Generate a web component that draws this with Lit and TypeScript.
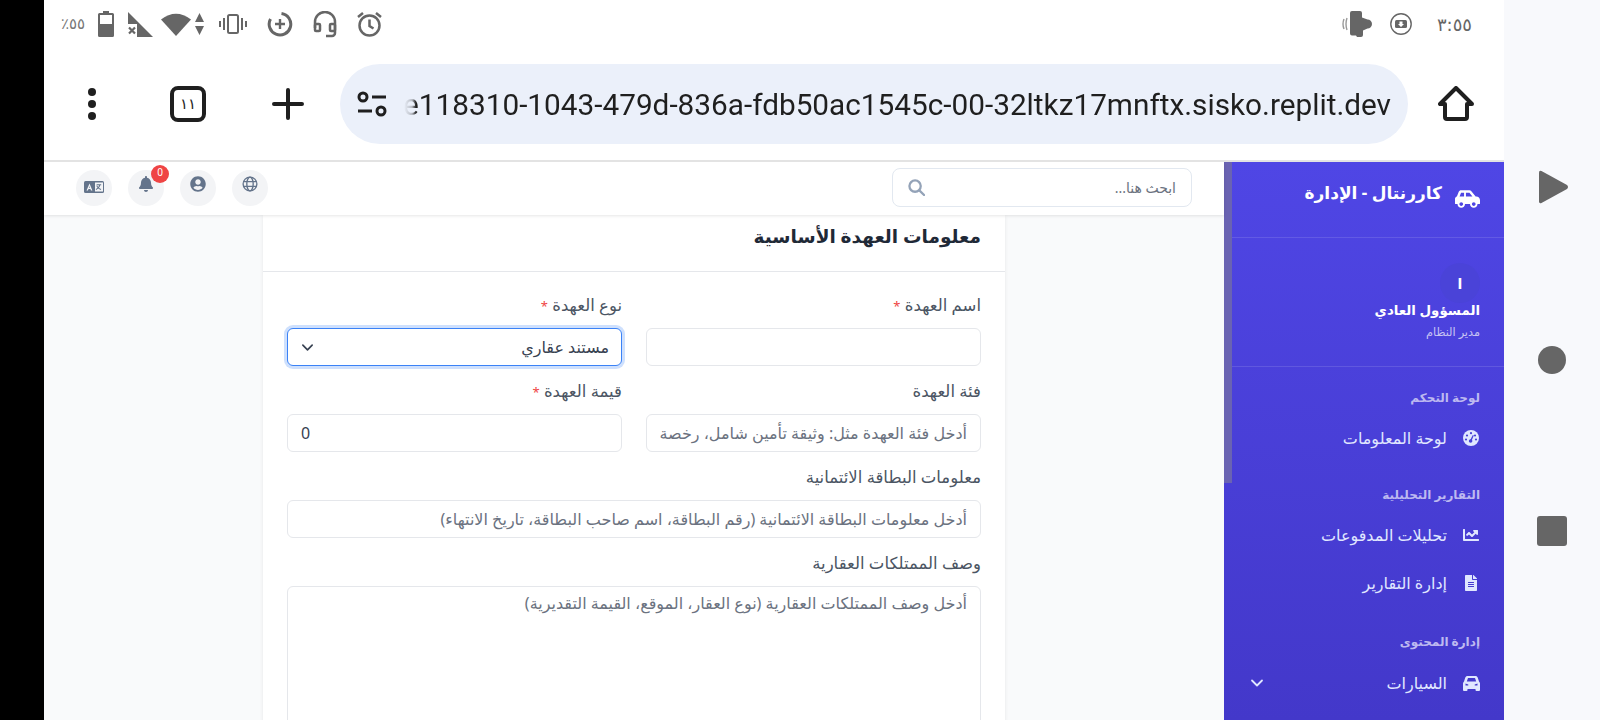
import { LitElement, html, css } from 'lit';
import { customElement } from 'lit/decorators.js';

const fa = (vb: string, d: string, cls = '') =>
  html`<svg class=${cls} viewBox=${vb} fill="currentColor"><path d=${d}></path></svg>`;

const CAR_SIDE = 'M544 192h-16L419.22 56.02A64.025 64.025 0 0 0 369.24 32H155.33c-26.17 0-49.7 15.93-59.42 40.23L48 194.26C20.44 201.4 0 226.21 0 256v112c0 8.84 7.16 16 16 16h48c0 53.02 42.98 96 96 96s96-42.98 96-96h128c0 53.02 42.98 96 96 96s96-42.98 96-96h48c8.84 0 16-7.16 16-16v-80c0-53.02-42.98-96-96-96zM160 432c-26.47 0-48-21.53-48-48s21.53-48 48-48 48 21.53 48 48-21.53 48-48 48zm72-240H116.93l38.4-96H232v96zm48 0V96h89.24l76.8 96H280zm200 240c-26.47 0-48-21.53-48-48s21.53-48 48-48 48 21.53 48 48-21.53 48-48 48z';
const CHART = 'M496 384H64V80c0-8.84-7.16-16-16-16H16C7.16 64 0 71.16 0 80v336c0 17.67 14.33 32 32 32h464c8.84 0 16-7.16 16-16v-32c0-8.84-7.16-16-16-16zM464 96H345.94c-21.38 0-32.09 25.85-16.97 40.97l32.4 32.4L288 242.75l-73.37-73.37c-12.5-12.5-32.76-12.5-45.25 0l-68.69 68.69c-6.25 6.25-6.25 16.38 0 22.63l22.62 22.62c6.25 6.25 16.38 6.25 22.63 0L192 237.25l73.37 73.37c12.5 12.5 32.76 12.5 45.25 0l96-96 32.4 32.4c15.12 15.12 40.97 4.41 40.97-16.97V112c.01-8.84-7.15-16-15.99-16z';
const FILE = 'M224 136V0H24C10.7 0 0 10.7 0 24v464c0 13.3 10.7 24 24 24h336c13.3 0 24-10.7 24-24V160H248c-13.2 0-24-10.8-24-24zm64 236c0 6.6-5.4 12-12 12H108c-6.6 0-12-5.4-12-12v-8c0-6.6 5.4-12 12-12h168c6.6 0 12 5.4 12 12v8zm0-64c0 6.6-5.4 12-12 12H108c-6.6 0-12-5.4-12-12v-8c0-6.6 5.4-12 12-12h168c6.6 0 12 5.4 12 12v8zm0-72v8c0 6.6-5.4 12-12 12H108c-6.6 0-12-5.4-12-12v-8c0-6.6 5.4-12 12-12h168c6.6 0 12 5.4 12 12zm96-114.1v6.1H256V0h6.1c6.4 0 12.5 2.5 17 7l97.9 98c4.5 4.5 7 10.6 7 16.9z';
const BELL = 'M224 512c35.32 0 63.97-28.65 63.97-64H160.03c0 35.35 28.65 64 63.97 64zm215.39-149.71c-19.32-20.76-55.47-51.99-55.47-154.29 0-77.7-54.48-139.9-127.94-155.16V32c0-17.67-14.32-32-31.98-32s-31.98 14.33-31.98 32v20.84C118.56 68.1 64.08 130.3 64.08 208c0 102.3-36.15 133.53-55.47 154.29-6 6.45-8.66 14.16-8.61 21.71.11 16.4 12.98 32 32.1 32h383.8c19.12 0 32-15.6 32.1-32 .05-7.55-2.61-15.27-8.61-21.71z';
const USER = 'M248 8C111 8 0 119 0 256s111 248 248 248 248-111 248-248S385 8 248 8zm0 96c48.6 0 88 39.4 88 88s-39.4 88-88 88-88-39.4-88-88 39.4-88 88-88zm0 344c-58.7 0-111.3-26.6-146.5-68.2 18.8-35.4 55.6-59.8 98.5-59.8 2.4 0 4.8.4 7.1 1.1 13 4.2 26.6 6.9 40.9 6.9 14.3 0 28-2.7 40.9-6.9 2.3-.7 4.7-1.1 7.1-1.1 42.9 0 79.7 24.4 98.5 59.8C359.3 421.4 306.7 448 248 448z';

const gauge = html`<svg viewBox="0 0 16 16"><circle cx="8" cy="8" r="8" fill="currentColor"></circle>
  <g fill="#4640d6"><circle cx="4" cy="5.5" r="1.1"></circle><circle cx="8" cy="3.2" r="1.1"></circle><circle cx="12" cy="5.5" r="1.1"></circle><circle cx="3" cy="9.5" r="1.1"></circle><circle cx="13" cy="9.5" r="1.1"></circle><circle cx="7.6" cy="11" r="1.8"></circle><path d="M7 10.6 9.8 5l1 .5-2.4 5.7z"></path></g></svg>`;

const carFront = html`<svg viewBox="0 0 17 15"><path fill="currentColor" fill-rule="evenodd" d="M4.500 0h8c1 0 1.800.6 2.200 1.500L16 5.500c.6.500 1 1.200 1 2V14a1 1 0 0 1-1 1h-2.500a1 1 0 0 1-1-1v-1h-8v1a1 1 0 0 1-1 1H1a1 1 0 0 1-1-1V7.500c0-.8.4-1.500 1-2l1.300-4C2.700.6 3.500 0 4.500 0zM5 2 3.800 5.500h9.400L12 2zM2.500 7.500v2h2.800v-1zM14.500 7.500l-2.800 1v1h2.800z"></path></svg>`;

const globe = html`<svg viewBox="0 0 20 20" fill="none" stroke="currentColor" stroke-width="1.7"><circle cx="10" cy="10" r="8.6"></circle><ellipse cx="10" cy="10" rx="4" ry="8.6"></ellipse><path d="M1.600 7h16.800M1.600 13h16.800"></path></svg>`;

const lang = html`<svg viewBox="0 0 20 12"><rect width="20" height="12" rx="1.500" fill="currentColor"></rect>
  <path d="M11 1.500h8v9h-8z" fill="#f3f4f6"></path>
  <path d="M5.500 2.400 8.400 9.600H7L6.400 8H4.500l-.6 1.600H2.500zM5 6.800h1L5.500 5.300z" fill="#f3f4f6"></path>
  <path d="M12.800 3.200h4.400v1h-.9c-.3 1.200-.8 2-1.400 2.600.6.500 1.300.8 2.300 1.100l-.4 1c-1-.3-1.900-.7-2.600-1.300-.6.600-1.300.9-2.100 1.300l-.4-1c.7-.3 1.300-.6 1.800-1.100-.5-.6-.9-1.200-1.200-2h1.100c.2.500.5.900.8 1.300.4-.5.7-1 .9-1.900h-2.800z" fill="currentColor"></path></svg>`;

const chevron = html`<svg viewBox="0 0 14 14" fill="none" stroke="currentColor" stroke-width="1.800" stroke-linecap="round" stroke-linejoin="round"><path d="M2 4.500 7 9.500 12 4.500"></path></svg>`;

@customElement('app-root')
export class AppRoot extends LitElement {
  static styles = css`
    :host {
      display: grid;
      grid-template-columns: 44px 1460px 96px;
      width: 1600px;
      height: 720px;
      overflow: hidden;
      background: #000;
      font-family: "Noto Sans", "DejaVu Sans", sans-serif;
    }
    svg { display: block; }

    .phone { display: flex; flex-direction: column; background: #fff; min-width: 0; height: 720px; }
    .navbar {
      background: #f8f9fc;
      display: flex;
      flex-direction: column;
      align-items: center;
      justify-content: center;
      gap: 142px;
      padding-bottom: 4px;
      color: #666;
    }
    .nav-tri { width: 30px; height: 34px; margin-left: 4px; }
    .nav-dot { width: 28px; height: 28px; border-radius: 50%; background: #666; }
    .nav-sq { width: 30px; height: 30px; border-radius: 3px; background: #666; }

    .status {
      height: 53px;
      flex: none;
      display: flex;
      align-items: center;
      justify-content: space-between;
      box-sizing: border-box;
      padding: 0 32px 5px 17px;
      color: #666;
    }
    .status-left, .status-right { display: flex; align-items: center; }
    .status .pct { font: 15px "DejaVu Sans", sans-serif; width: 37px; color: #777; }
    .status .time { font: 18px "DejaVu Sans", sans-serif; margin-left: 25px; }

    .toolbar {
      height: 109px;
      flex: none;
      display: flex;
      align-items: center;
      border-bottom: 2px solid #e3e3e3;
      padding-bottom: 5px;
      box-sizing: border-box;
      color: #1f1f1f;
    }
    .dots { width: 8px; margin-left: 44px; display: flex; flex-direction: column; gap: 4px; }
    .dots i { width: 8px; height: 8px; border-radius: 50%; background: #1f1f1f; }
    .tabs {
      width: 36px;
      height: 36px;
      margin-left: 74px;
      box-sizing: border-box;
      border: 4px solid #1f1f1f;
      border-radius: 8px;
      display: flex;
      align-items: center;
      justify-content: center;
      font: 15px "DejaVu Sans", sans-serif;
    }
    .plus { width: 32px; height: 32px; margin-left: 66px; }
    .url {
      width: 1068px;
      height: 80px;
      margin-left: 36px;
      border-radius: 40px;
      background: #ebf0fa;
      display: flex;
      align-items: center;
      box-sizing: border-box;
      padding: 0 17px 0 17px;
    }
    .tune { width: 30px; height: 26px; flex: none; }
    .url-text {
      flex: 1;
      min-width: 0;
      margin-left: 15px;
      overflow: hidden;
      display: flex;
      justify-content: flex-end;
      white-space: nowrap;
      font: 29.750px Roboto, sans-serif;
      color: #1f1f1f;
      -webkit-mask-image: linear-gradient(to right, transparent 2px, rgba(0, 0, 0, 0.25) 10px, #000 14px);
      mask-image: linear-gradient(to right, transparent 2px, rgba(0, 0, 0, 0.25) 10px, #000 14px);
    }
    .home { width: 36px; height: 36px; margin-left: 30px; }

    .app { flex: 1; min-height: 0; display: flex; direction: rtl; overflow: hidden; background: #f9fafb; }

    .sidebar {
      position: relative;
      width: 280px;
      flex: none;
      background: linear-gradient(180deg, #4f46e5 0%, #4338ca 100%);
      color: #fff;
      overflow: hidden;
    }
    .scroll-thumb { position: absolute; left: 0; top: 0; width: 8px; height: 321px; background: #6a63b2; }
    .brand {
      height: 76px;
      box-sizing: border-box;
      padding: 19px 24px 0;
      display: flex;
      gap: 13px;
      border-bottom: 1px solid rgba(255, 255, 255, 0.12);
      font-size: 17px;
      font-weight: 700;
      line-height: 24px;
    }
    .brand svg { width: 25px; height: 20px; margin-top: 8px; }
    .user {
      height: 129px;
      box-sizing: border-box;
      padding: 25px 24px 0;
      border-bottom: 1px solid rgba(255, 255, 255, 0.12);
    }
    .avatar {
      width: 40px;
      height: 40px;
      border-radius: 50%;
      background: #4a43d8;
      display: flex;
      align-items: center;
      justify-content: center;
      font-size: 14px;
      font-weight: 700;
    }
    .user-name { font-size: 13.400px; font-weight: 700; line-height: 18px; margin-top: -2px; }
    .user-role { font-size: 11.300px; line-height: 14px; margin-top: 6px; color: #c7c4f3; }
    .nav-group { padding: 0 24px; }
    .nav-label { font-size: 12px; font-weight: 600; line-height: 16px; color: #bdb9f0; }
    .nav-item {
      height: 48px;
      display: flex;
      align-items: center;
      gap: 15px;
      font-size: 16px;
      color: #e0e7ff;
    }
    .nav-item svg { width: 16px; height: 16px; flex: none; }
    .nav-item .ico { width: 18px; flex: none; display: flex; justify-content: center; }
    .nav-item .ico.car svg { width: 17px; height: 15px; }
    .nav-item .more { width: 14px; height: 14px; margin-right: auto; margin-left: 2px; }

    .main { flex: 1; min-width: 0; display: flex; flex-direction: column; }
    .topbar {
      height: 53px;
      flex: none;
      box-sizing: border-box;
      background: #fff;
      box-shadow: 0 1px 3px rgba(0, 0, 0, 0.1);
      position: relative;
      z-index: 1;
      display: flex;
      align-items: center;
      justify-content: space-between;
      padding: 0 32px 2px;
    }
    .search {
      width: 300px;
      height: 39px;
      box-sizing: border-box;
      border: 1px solid #e2e8f0;
      border-radius: 8px;
      display: flex;
      align-items: center;
      justify-content: space-between;
      padding: 0 15px;
      font-size: 14px;
      color: #6b7280;
    }
    .search input {
      border: 0;
      outline: 0;
      background: none;
      flex: 1;
      min-width: 0;
      padding: 0;
      font: inherit;
    }
    .search input::placeholder { color: #6b7280; opacity: 1; }
    .search svg { width: 17px; height: 17px; color: #94a3b8; flex: none; }
    .top-icons { display: flex; gap: 16px; padding-top: 1px; }
    .round {
      position: relative;
      width: 36px;
      height: 36px;
      border-radius: 50%;
      background: #f3f4f6;
      color: #64748b;
      display: flex;
      align-items: center;
      justify-content: center;
    }
    .round svg { width: 16px; height: 16px; margin-top: -8px; }
    .round.lang svg { width: 20px; height: 12px; margin: -2px 0 0; }
    .badge {
      position: absolute;
      top: -5px;
      right: -5px;
      width: 18px;
      height: 18px;
      border-radius: 50%;
      background: #ef4444;
      color: #fff;
      font-size: 10px;
      line-height: 15px;
      text-align: center;
    }

    .content { flex: 1; min-height: 0; overflow: hidden; display: flex; justify-content: center; }
    .card {
      width: 742px;
      background: #fff;
      box-shadow: 0 1px 4px rgba(0, 0, 0, 0.08);
      align-self: flex-start;
    }
    .card-head {
      height: 57px;
      box-sizing: border-box;
      padding: 8px 24px 0;
      border-bottom: 1px solid #e5e7eb;
      font-size: 18.500px;
      font-weight: 600;
      line-height: 26px;
      color: #1f2937;
    }
    .form {
      padding: 23px 24px 0;
      display: grid;
      grid-template-columns: 1fr 1fr;
      column-gap: 24px;
      row-gap: 15px;
    }
    .wide { grid-column: 1 / -1; }
    .field label {
      display: block;
      height: 20px;
      line-height: 20px;
      margin-bottom: 13px;
      font-size: 16.500px;
      color: #4b5563;
    }
    .field label b { color: #ef4444; font-weight: 400; font-size: 13px; }
    .field input, .field select, .field textarea {
      display: block;
      width: 100%;
      height: 38px;
      box-sizing: border-box;
      border: 1px solid #e5e7eb;
      border-radius: 6px;
      background: #fff;
      padding: 0 13px;
      font: 16px "Noto Sans", "DejaVu Sans", sans-serif;
      color: #374151;
      outline: 0;
    }
    .field input::placeholder, .field textarea::placeholder { color: #6b7280; opacity: 1; }
    .field input.num { direction: ltr; text-align: left; }
    .field textarea { height: 220px; padding-top: 5px; resize: none; }
    .field select {
      appearance: none;
      padding: 0 12px;
      border-color: #3b82f6;
      box-shadow: 0 0 0 3px rgba(59, 130, 246, 0.25);
    }
    .select-wrap { position: relative; }
    .select-wrap svg {
      position: absolute;
      left: 14px;
      top: 13px;
      width: 13px;
      height: 13px;
      color: #374151;
      pointer-events: none;
    }
  `;

  private statusLeft() {
    return html`
      <span class="pct">٪٥٥</span>
      <svg width="16" height="26" viewBox="0 0 16 26"><path d="M5 0h6v2h3.500a1.500 1.500 0 0 1 1.500 1.500v21a1.500 1.500 0 0 1-1.500 1.500h-13A1.500 1.500 0 0 1 0 24.500v-21A1.500 1.500 0 0 1 1.500 2H5z" fill="#666"></path><rect x="2" y="4" width="12" height="9" fill="#fff"></rect></svg>
      <svg style="margin-left:14px" width="25" height="25" viewBox="0 0 25 25"><path d="M0 0 25 25H9V12H0z" fill="#666"></path><path d="M1 15.500 7 21.500M7 15.500 1 21.500" stroke="#666" stroke-width="2.200"></path></svg>
      <svg style="margin-left:8px" width="30" height="24" viewBox="0 0 30 24"><path d="M0 7.500Q15-4 30 7.500L15 24z" fill="#666"></path></svg>
      <svg style="margin-left:4px" width="9" height="22" viewBox="0 0 9 22"><path d="M4.500 0 9 9H0zM0 13h9l-4.500 9z" fill="#666"></path></svg>
      <svg style="margin-left:15px" width="28" height="20" viewBox="0 0 28 20" fill="none" stroke="#666" stroke-width="2"><rect x="9" y="1" width="10" height="18" rx="1.500"></rect><path d="M5 4v12M1 7v6M23 4v12M27 7v6"></path></svg>
      <svg style="margin-left:20px" width="26" height="26" viewBox="0 0 26 26" fill="none" stroke="#666" stroke-width="3"><path d="M14.500 2.500A10.800 10.800 0 1 1 3.500 8"></path><path d="M13 8v10M8 13h10" stroke-width="2.400"></path></svg>
      <svg style="margin-left:20px" width="24" height="27" viewBox="0 0 24 27" fill="none" stroke="#666" stroke-width="2.500"><path d="M2 17V11a10 10 0 0 1 20 0v11a3 3 0 0 1-3 3h-6"></path><rect x="2" y="13" width="5" height="7" rx="1"></rect><rect x="17" y="13" width="5" height="7" rx="1"></rect></svg>
      <svg style="margin-left:20px" width="25" height="26" viewBox="0 0 25 26" fill="none" stroke="#666" stroke-width="2.500"><circle cx="12.500" cy="14.500" r="10"></circle><path d="M12.500 8.500v6.500l4 2.500M1 6l5-4M24 6l-5-4"></path></svg>
    `;
  }

  private statusRight() {
    return html`
      <svg width="30" height="26" viewBox="0 0 30 26"><path d="M10 0h8a2 2 0 0 1 2 2v4.500l5.500 2a4.500 4.500 0 0 1 0 9L21 19.500V24a2 2 0 0 1-2 2h-4l-1-1.500h-4a2 2 0 0 1-2-2V2a2 2 0 0 1 2-2z" fill="#666"></path><path d="M5 7q-2 6 0 12M2 8q-2 5 0 10" fill="none" stroke="#999" stroke-width="1.400"></path></svg>
      <svg style="margin-left:18px" width="22" height="22" viewBox="0 0 22 22"><circle cx="11" cy="11" r="10.200" fill="none" stroke="#666" stroke-width="1.400"></circle><rect x="5" y="7" width="12" height="8" rx="1.500" fill="#666"></rect><path d="M9.500 8.500h3V11H14l-3 3-3-3h1.500z" fill="#fff"></path></svg>
      <span class="time">٣:٥٥</span>
    `;
  }

  render() {
    return html`
      <div></div>
      <div class="phone">
        <div class="status">
          <div class="status-left">${this.statusLeft()}</div>
          <div class="status-right">${this.statusRight()}</div>
        </div>
        <div class="toolbar">
          <div class="dots"><i></i><i></i><i></i></div>
          <div class="tabs">١١</div>
          <svg class="plus" viewBox="0 0 32 32" fill="none" stroke="currentColor" stroke-width="4" stroke-linecap="round"><path d="M16 2v28M2 16h28"></path></svg>
          <div class="url">
            <svg class="tune" viewBox="0 0 30 26" fill="none" stroke="currentColor" stroke-width="3"><circle cx="6" cy="6" r="4"></circle><path d="M15 6h14M1 20h14"></path><circle cx="24" cy="20" r="4"></circle></svg>
            <div class="url-text"><span>e118310-1043-479d-836a-fdb50ac1545c-00-32ltkz17mnftx.sisko.replit.dev</span></div>
          </div>
          <svg class="home" viewBox="0 0 36 36" fill="none" stroke="currentColor" stroke-width="4" stroke-linejoin="round"><path d="M18 2 2 18h5v13a2 2 0 0 0 2 2h18a2 2 0 0 0 2-2V18h5z"></path></svg>
        </div>
        <div class="app">
          ${this.renderSidebar()}
          <div class="main">
            <div class="topbar">
              <div class="search">
                <input placeholder="ابحث هنا..." />
                <svg viewBox="0 0 18 18" fill="none" stroke="currentColor" stroke-width="2.400" stroke-linecap="round"><circle cx="7.500" cy="7.500" r="6"></circle><path d="M12 12l5 5"></path></svg>
              </div>
              <div class="top-icons">
                <div class="round">${globe}</div>
                <div class="round">${fa('0 0 496 512', USER)}</div>
                <div class="round">${fa('0 0 448 512', BELL)}<span class="badge">0</span></div>
                <div class="round lang">${lang}</div>
              </div>
            </div>
            <div class="content">
              <div class="card">
                <div class="card-head">معلومات العهدة الأساسية</div>
                <div class="form">
                  <div class="field">
                    <label>اسم العهدة <b>*</b></label>
                    <input type="text" />
                  </div>
                  <div class="field">
                    <label>نوع العهدة <b>*</b></label>
                    <div class="select-wrap">
                      <select><option>مستند عقاري</option></select>
                      ${chevron}
                    </div>
                  </div>
                  <div class="field">
                    <label>فئة العهدة</label>
                    <input type="text" placeholder="أدخل فئة العهدة مثل: وثيقة تأمين شامل، رخصة قيادة" />
                  </div>
                  <div class="field">
                    <label>قيمة العهدة <b>*</b></label>
                    <input class="num" type="text" value="0" />
                  </div>
                  <div class="field wide">
                    <label>معلومات البطاقة الائتمانية</label>
                    <input type="text" placeholder="أدخل معلومات البطاقة الائتمانية (رقم البطاقة، اسم صاحب البطاقة، تاريخ الانتهاء)" />
                  </div>
                  <div class="field wide">
                    <label>وصف الممتلكات العقارية</label>
                    <textarea placeholder="أدخل وصف الممتلكات العقارية (نوع العقار، الموقع، القيمة التقديرية)"></textarea>
                  </div>
                </div>
              </div>
            </div>
          </div>
        </div>
      </div>
      <div class="navbar">
        <svg class="nav-tri" viewBox="0 0 30 34"><path d="M0 2.500Q0 0 2.500 1L28 15q2 2 0 4L2.500 33Q0 34 0 31.500z" fill="currentColor"></path></svg>
        <div class="nav-dot"></div>
        <div class="nav-sq"></div>
      </div>
    `;
  }

  private renderSidebar() {
    return html`
      <aside class="sidebar">
        <div class="scroll-thumb"></div>
        <div class="brand">${fa('0 0 640 512', CAR_SIDE)}<span>كاررنتال - الإدارة</span></div>
        <div class="user">
          <div class="avatar">ا</div>
          <div class="user-name">المسؤول العادي</div>
          <div class="user-role">مدير النظام</div>
        </div>
        <div class="nav-group" style="padding-top:23px">
          <div class="nav-label">لوحة التحكم</div>
          <div class="nav-item" style="margin-top:8px"><span class="ico">${gauge}</span>لوحة المعلومات</div>
        </div>
        <div class="nav-group" style="padding-top:25px">
          <div class="nav-label">التقارير التحليلية</div>
          <div class="nav-item" style="margin-top:8px"><span class="ico">${fa('0 0 512 512', CHART)}</span>تحليلات المدفوعات</div>
          <div class="nav-item"><span class="ico">${fa('0 0 384 512', FILE)}</span>إدارة التقارير</div>
        </div>
        <div class="nav-group" style="padding-top:27px">
          <div class="nav-label">إدارة المحتوى</div>
          <div class="nav-item" style="margin-top:9px"><span class="ico car">${carFront}</span>السيارات<svg class="more" viewBox="0 0 14 14" fill="none" stroke="currentColor" stroke-width="1.800" stroke-linecap="round" stroke-linejoin="round"><path d="M2 4.500 7 9.500 12 4.500"></path></svg></div>
        </div>
      </aside>
    `;
  }
}
